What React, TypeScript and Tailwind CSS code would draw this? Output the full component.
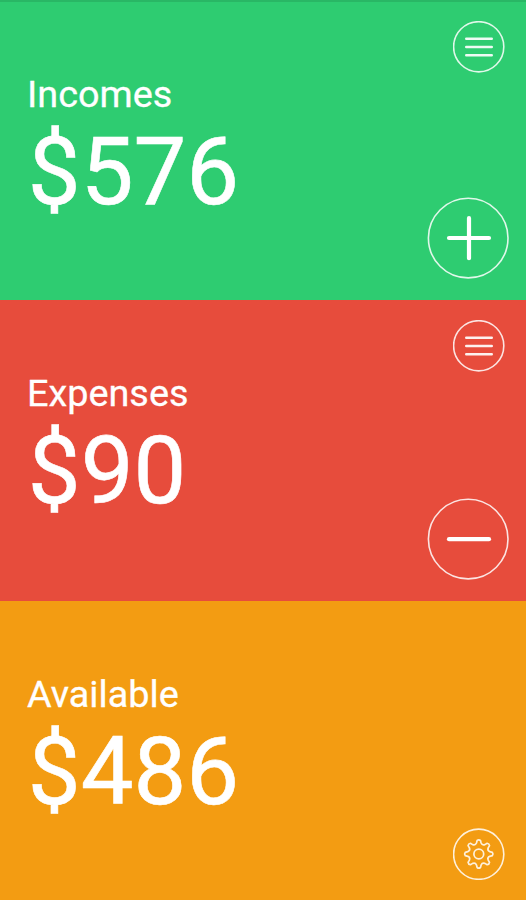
import type { ReactNode } from "react";

const TEETH = 8;

function gearPath(cx: number, cy: number) {
  const at = (radius: number, degrees: number) => {
    const a = (degrees * Math.PI) / 180;
    return `${(cx + radius * Math.sin(a)).toFixed(2)} ${(cy - radius * Math.cos(a)).toFixed(2)}`;
  };
  let d = "";
  for (let i = 0; i < TEETH; i++) {
    const c = (i * 360) / TEETH;
    d += `${i === 0 ? "M" : "L"}${at(11.2, c - 12)} L${at(13.6, c - 7)} Q${at(14.8, c)} ${at(13.6, c + 7)} L${at(11.2, c + 12)} Q${at(9, c + 22.5)} ${at(11.2, c + 33)} `;
  }
  return d + "Z";
}

function MenuIcon() {
  return (
    <svg className="block" width="52" height="52" viewBox="0 0 52 52" fill="none" stroke="white">
      <circle cx="25.7" cy="25.8" r="25.1" strokeWidth="1.6" strokeOpacity="0.85" />
      <path d="M13.2 17.8h25.6M13.2 26h25.6M13.2 34.2h25.6" strokeWidth="2.4" strokeLinecap="round" strokeOpacity="0.92" />
    </svg>
  );
}

function GearIcon() {
  return (
    <svg className="block" width="52" height="52" viewBox="0 0 52 52" fill="none" stroke="white" strokeOpacity="0.85">
      <circle cx="25.7" cy="26.2" r="25.1" strokeWidth="1.6" />
      <path d={gearPath(25.8, 26)} strokeWidth="1.7" strokeLinejoin="round" />
      <circle cx="25.8" cy="26" r="4.9" strokeWidth="1.7" />
    </svg>
  );
}

function AmountIcon({ plus = false }: { plus?: boolean }) {
  return (
    <svg className="block" width="82" height="82" viewBox="0 0 82 82" fill="none" stroke="white">
      <circle cx="41.2" cy="41.1" r="39.8" strokeWidth="1.6" strokeOpacity="0.85" />
      <path d={plus ? "M22 41h40M42 21.2v40" : "M22 41.2h40"} strokeWidth="4.2" strokeLinecap="round" />
    </svg>
  );
}

function Panel({ label, amount, className, children }: { label: string; amount: string; className: string; children: ReactNode }) {
  return (
    <section className={`flex justify-between text-white ${className}`}>
      <div className="flex flex-col gap-2 pl-[27px]">
        <h2 className="text-[37.8px] leading-[44px] [-webkit-text-stroke:0.3px_white]">{label}</h2>
        <p className="pl-[0.8px] text-[94px] leading-[96px] [-webkit-text-stroke:0.6px_white]">{amount}</p>
      </div>
      <div className="-mt-[51px] flex flex-col items-end justify-between">{children}</div>
    </section>
  );
}

export default function App() {
  return (
    <main className="flex h-[900px] w-full flex-col font-['Roboto',sans-serif]">
      <Panel label="Incomes" amount="$576" className="h-[300px] border-t-2 border-[#29b765] bg-[#2ecc71] pt-[70px]">
        <button aria-label="List incomes" className="mr-[21px]"><MenuIcon /></button>
        <button aria-label="Add income" className="mr-[17px] mb-[21px]"><AmountIcon plus /></button>
      </Panel>
      <Panel label="Expenses" amount="$90" className="h-[301px] bg-[#e74c3c] pt-[71px]">
        <button aria-label="List expenses" className="mr-[21px]"><MenuIcon /></button>
        <button aria-label="Add expense" className="mr-[17px] mb-[21px]"><AmountIcon /></button>
      </Panel>
      <Panel label="Available" amount="$486" className="h-[299px] bg-[#f39c12] pt-[71px]">
        <button aria-label="Settings" className="mt-auto mr-[21px] mb-[20px]"><GearIcon /></button>
      </Panel>
    </main>
  );
}
